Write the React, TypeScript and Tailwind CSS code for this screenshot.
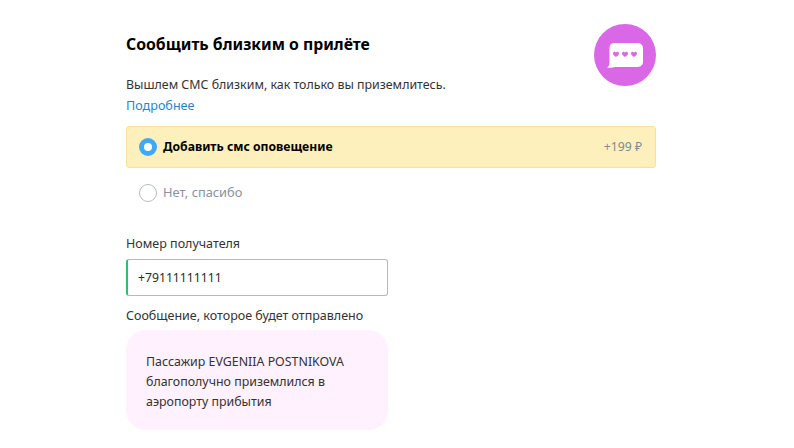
function SmsIcon() {
  const heart = 'M0 -1.800c-.7-1.500-3-1.200-3 .8 0 1.500 1.700 2.500 3 3.600 1.300-1.100 3-2.100 3-3.600 0-2-2.300-2.300-3-.8z'
  return (
    <div className="flex h-[62px] w-[62px] shrink-0 items-center justify-center rounded-full bg-[#da68e6]">
      <svg width="36" height="30" viewBox="0 0 36 30">
        <path d="M7 3h24a5 5 0 0 1 5 5v14a5 5 0 0 1-5 5H8c-2 .8-5 1-8 .4 1.500-.8 2.500-2.400 2.500-4.400V8a5 5 0 0 1 4.500-5z" fill="#fff" />
        <path d={heart} transform="translate(9 14.500)" fill="#da68e6" />
        <path d={heart} transform="translate(18 14.500)" fill="#da68e6" />
        <path d={heart} transform="translate(27 14.500)" fill="#da68e6" />
      </svg>
    </div>
  )
}

export default function App() {
  return (
    <div className="h-[448px] w-[794px] overflow-hidden bg-white pl-[126px] pt-[24px] font-['Noto_Sans',sans-serif] text-[12.5px] text-[#333]">
      <div className="w-[530px]">
        <div className="flex justify-between">
          <div>
            <h1 className="mt-[8px] text-[15.8px] leading-[24px] font-bold text-black">Сообщить близким о прилёте</h1>
            <p className="mt-[19px] text-[12.4px] leading-[20px]">Вышлем СМС близким, как только вы приземлитесь.</p>
            <a className="mt-[1px] block leading-[20px] text-[12.6px] text-[#1f86c7]">Подробнее</a>
          </div>
          <SmsIcon />
        </div>

        <div className="mt-[10px] flex h-[42px] items-center justify-between rounded-[3px] border border-[#fde09a] bg-[#fef0bc] pl-[12px] pr-[13px]">
          <div className="flex items-center gap-[6px]">
            <span className="flex h-[18px] w-[18px] items-center justify-center rounded-full bg-[#3fa9f5]">
              <span className="h-[8px] w-[8px] rounded-full bg-white" />
            </span>
            <span className="text-[12.2px] font-bold text-black">Добавить смс оповещение</span>
          </div>
          <span className="text-[12.2px] text-[#7f8a96]">+199 ₽</span>
        </div>

        <div className="mt-[15px] flex items-center gap-[6px] pl-[13px]">
          <span className="h-[18px] w-[18px] rounded-full border border-[#b5bcc4] bg-white" />
          <span className="text-[12.8px] text-[#8a929c]">Нет, спасибо</span>
        </div>

        <label className="mt-[32px] block leading-[20px]">Номер получателя</label>
        <div className="mt-[5px] flex h-[37px] w-[262px] items-center rounded-[3px] border border-[#b8b8b8] border-l-[2px] border-l-[#2fbf6c] pl-[10px] text-[12.2px] text-[#2b2b2b]">
          +79111111111
        </div>

        <p className="mt-[10px] leading-[20px]">Сообщение, которое будет отправлено</p>
        <div className="mt-[4px] h-[100px] w-[262px] rounded-[20px] bg-[#fff1fd] px-[20px] pt-[22px] text-[12.4px] leading-[20px]">
          Пассажир EVGENIIA POSTNIKOVA благополучно приземлился в аэропорту прибытия
        </div>
      </div>
    </div>
  )
}
